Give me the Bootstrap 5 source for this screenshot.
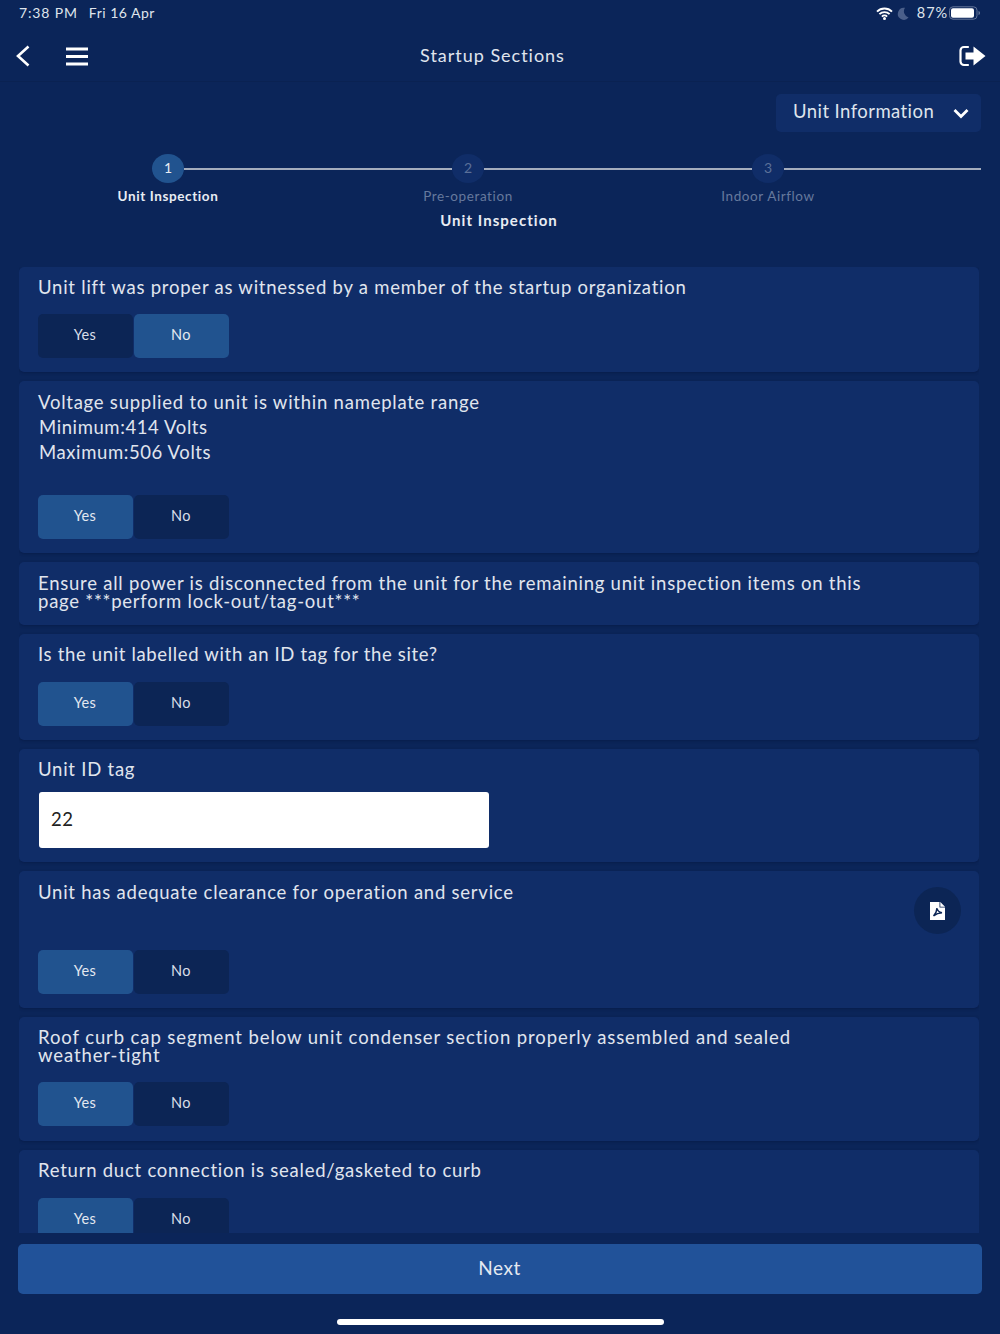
<!DOCTYPE html>
<html lang="en">
<head>
<meta charset="utf-8">
<title>Startup Sections</title>
<link rel="stylesheet" href="https://cdn.jsdelivr.net/npm/bootstrap@5.3.0/dist/css/bootstrap.min.css">
<style>
html,body{height:100%;}
body{background:#0b2559;color:#e8ecf3;font-family:Lato,"Liberation Sans",sans-serif;overflow:hidden;}
.app-shell{width:1000px;height:1334px;}
.status-bar{height:28px;padding:0 19px 4px 19px;font-size:14px;letter-spacing:.85px;color:#dfe4ec;}
.status-date{margin-left:11px;letter-spacing:.5px;}
.status-right{padding-top:2px;}
.status-pct{margin:0 -3px 0 4px;font-size:14.5px;letter-spacing:.9px;}
.nav-strip{height:54px;padding:2px 14px 0 15px;border-bottom:1px solid #0a2252;}
.nav-title{font-size:18px;letter-spacing:.98px;color:#e0e5ee;margin-left:-16px;}
.nav-side{width:130px;}
.menu-bars{margin:1px 0 0 35px;}
.dd-row{height:60px;padding:12px 19px 0 0;}
.dd-box{width:205px;height:38px;background:#102d68;border-radius:5px;padding:0 12px 2px 17px;font-size:18.5px;letter-spacing:.43px;color:#dfe4ec;}
.dd-box svg{margin-top:2px;}
.step-track{margin-top:12px;height:29px;padding:0 19px 0 152px;}
.step-dot{width:32px;height:29px;border-radius:50%;background:#102d68;color:#5b7099;font-size:14px;padding-bottom:3px;}
.step-dot.is-on{background:#21538f;color:#e8ecf3;}
.step-line{height:2px;background:#a5adbd;}
.step-line.seg{width:268px;}
.step-labels{margin:4px 0 0 18px;width:900px;font-size:13.5px;letter-spacing:.6px;color:#66799d;line-height:18px;}
.step-labels .on{color:#e8ecf3;font-weight:700;letter-spacing:.6px;}
.sec-title{font-size:15px;font-weight:700;letter-spacing:1.05px;line-height:18px;margin-top:6px;margin-left:-2px;color:#e8ecf3;}
.scroll-zone{margin:38px 21px 0 19px;height:966px;overflow:hidden;gap:9px;}
.q-card{background:#102d68;border-radius:5px;padding:10px 18px 14px 19px;box-shadow:0 1px 3px rgba(5,20,55,.45);}
.q-card.has-lines{padding-top:9px;}
.q-card.has-note{padding:12px 18px 15px 19px;}
.q-card.has-wrap{padding:11px 18px 15px 19px;}
.q-card.has-pdf{padding-top:11px;}
.q-text{font-size:18.5px;letter-spacing:.76px;line-height:20px;width:840px;color:#e0e5ee;}
.q-lines{line-height:25px;}
.q-indent{padding-left:1px;letter-spacing:.6px;}
.q-tight{line-height:18px;}
.q-loose{letter-spacing:.9px;width:820px;}
.q-snug{letter-spacing:.66px;}
.yn-group{margin-top:17px;gap:1px;}
.yn-group.mid{margin-top:18px;}
.yn-group.far-a{margin-top:30px;}
.yn-group.far-b{margin-top:48px;}
.yn-btn{width:95px;height:44px;border:0;border-radius:5px;background:#0c2555;color:#d9dfe9;font-size:14.5px;letter-spacing:.4px;padding:0 1px 2px 0;}
.yn-btn.is-on{background:#21538f;color:#e4e9f1;}
.id-input{width:450px;height:56px;margin:13px 0 0 1px;border-radius:3px;border:0;background:#fff;color:#222;font-size:18.5px;padding:0 12px 3px;letter-spacing:.6px;}
.pdf-round{width:47px;height:47px;border-radius:50%;background:#0c2555;right:18px;top:16px;}
.next-btn{display:block;width:964px;height:50px;margin:11px 0 0 18px;border:0;border-radius:5px;background:#215299;color:#e4e9f1;font-size:19px;letter-spacing:.5px;padding:0 1px 2px 0;}
.home-bar{width:327px;height:6px;border-radius:3px;background:#fff;margin:25px auto 0;}
</style>
</head>
<body>
<div class="app-shell d-flex flex-column">
  <div class="status-bar d-flex align-items-center justify-content-between">
    <div><span>7:38 PM</span><span class="status-date">Fri 16 Apr</span></div>
    <div class="status-right d-flex align-items-center gap-1">
      <svg width="17" height="13" viewBox="0 0 17 13"><path d="M1 4.600a10.600 10.600 0 0 1 15 0M3.400 7.200a7.200 7.200 0 0 1 10.200 0M5.900 9.600a3.700 3.700 0 0 1 5.200 0" fill="none" stroke="#fff" stroke-width="1.900"/><circle cx="8.500" cy="11.500" r="1.500" fill="#fff"/></svg>
      <svg width="12" height="13" viewBox="0 0 12 13"><path d="M8 .8a6 6 0 1 0 3.600 9.600A6.300 6.300 0 0 1 8 .8z" fill="#4a5f8a"/></svg>
      <span class="status-pct">87%</span>
      <svg width="32" height="14" viewBox="0 0 32 14"><rect x=".5" y=".8" width="27.500" height="12.400" rx="3.500" fill="none" stroke="#64769a"/><rect x="2" y="2.300" width="23" height="9.400" rx="2" fill="#fff"/><path d="M29.500 5v4c1-.3 1.500-1 1.500-2s-.5-1.700-1.500-2z" fill="#64769a"/></svg>
    </div>
  </div>

  <div class="nav-strip d-flex align-items-center justify-content-between">
    <div class="nav-side d-flex align-items-center">
      <svg width="16" height="22" viewBox="0 0 16 22"><path d="M13.500 1.500 3 11l10.500 9.500" fill="none" stroke="#fff" stroke-width="2.600"/></svg>
      <svg class="menu-bars" width="22" height="19" viewBox="0 0 22 19"><path d="M0 2h22M0 9.500h22M0 17h22" stroke="#fff" stroke-width="3"/></svg>
    </div>
    <div class="nav-title">Startup Sections</div>
    <div class="nav-side d-flex justify-content-end">
      <svg width="27" height="22" viewBox="0 0 27 22"><path d="M9 2H5a3.500 3.500 0 0 0-3.500 3.500v11A3.500 3.500 0 0 0 5 20h4" fill="none" stroke="#fff" stroke-width="2.200" stroke-linecap="round"/><path d="M6.500 7.500h8V1.500L26.500 11 14.500 20.500v-6h-8z" fill="#fff"/></svg>
    </div>
  </div>

  <div class="dd-row d-flex justify-content-end">
    <div class="dd-box d-flex align-items-center justify-content-between">
      <span>Unit Information</span>
      <svg width="16" height="11" viewBox="0 0 16 11"><path d="M1.500 2 8 8.500 14.500 2" fill="none" stroke="#fff" stroke-width="2.800"/></svg>
    </div>
  </div>

  <div class="step-track d-flex align-items-center">
    <div class="step-dot is-on d-flex align-items-center justify-content-center flex-shrink-0">1</div>
    <div class="step-line seg"></div>
    <div class="step-dot d-flex align-items-center justify-content-center flex-shrink-0">2</div>
    <div class="step-line seg"></div>
    <div class="step-dot d-flex align-items-center justify-content-center flex-shrink-0">3</div>
    <div class="step-line flex-grow-1"></div>
  </div>
  <div class="step-labels d-flex text-center">
    <div class="w-100 on">Unit Inspection</div>
    <div class="w-100">Pre-operation</div>
    <div class="w-100">Indoor Airflow</div>
  </div>
  <div class="sec-title text-center">Unit Inspection</div>

  <div class="scroll-zone d-flex flex-column">
    <div class="q-card flex-shrink-0">
      <div class="q-text">Unit lift was proper as witnessed by a member of the startup organization</div>
      <div class="yn-group d-flex"><button class="yn-btn">Yes</button><button class="yn-btn is-on">No</button></div>
    </div>
    <div class="q-card has-lines flex-shrink-0">
      <div class="q-text q-lines">Voltage supplied to unit is within nameplate range<div class="q-indent">Minimum:414 Volts</div><div class="q-indent">Maximum:506 Volts</div></div>
      <div class="yn-group far-a d-flex"><button class="yn-btn is-on">Yes</button><button class="yn-btn">No</button></div>
    </div>
    <div class="q-card has-note flex-shrink-0">
      <div class="q-text q-tight">Ensure all power is disconnected from the unit for the remaining unit inspection items on this page ***perform lock-out/tag-out***</div>
    </div>
    <div class="q-card flex-shrink-0">
      <div class="q-text q-snug">Is the unit labelled with an ID tag for the site?</div>
      <div class="yn-group mid d-flex"><button class="yn-btn is-on">Yes</button><button class="yn-btn">No</button></div>
    </div>
    <div class="q-card flex-shrink-0">
      <div class="q-text">Unit ID tag</div>
      <input class="id-input d-block" type="text" value="22">
    </div>
    <div class="q-card has-pdf flex-shrink-0 position-relative">
      <div class="q-text">Unit has adequate clearance for operation and service</div>
      <div class="yn-group far-b d-flex"><button class="yn-btn is-on">Yes</button><button class="yn-btn">No</button></div>
      <div class="pdf-round position-absolute d-flex align-items-center justify-content-center">
        <svg width="15" height="18" viewBox="0 0 15 18"><path d="M0 0h9.500L15 5.500V18H0z" fill="#fff"/><path d="M9.500 0v5.500H15z" fill="#0c2555"/><path d="M10.300 0 15 4.700h-4.700z" fill="#fff"/><path d="M7 6c.3 2.200 1.800 4.200 5 4.700-2.600.1-5.400.8-8.500 3.300C5 12.500 6.700 10 7 6z" fill="none" stroke="#0c2555" stroke-width="1.500"/></svg>
      </div>
    </div>
    <div class="q-card has-wrap flex-shrink-0">
      <div class="q-text q-tight q-loose">Roof curb cap segment below unit condenser section properly assembled and sealed weather-tight</div>
      <div class="yn-group mid d-flex"><button class="yn-btn is-on">Yes</button><button class="yn-btn">No</button></div>
    </div>
    <div class="q-card flex-shrink-0">
      <div class="q-text">Return duct connection is sealed/gasketed to curb</div>
      <div class="yn-group mid d-flex"><button class="yn-btn is-on">Yes</button><button class="yn-btn">No</button></div>
    </div>
  </div>

  <button class="next-btn">Next</button>
  <div class="home-bar"></div>
</div>
</body>
</html>
